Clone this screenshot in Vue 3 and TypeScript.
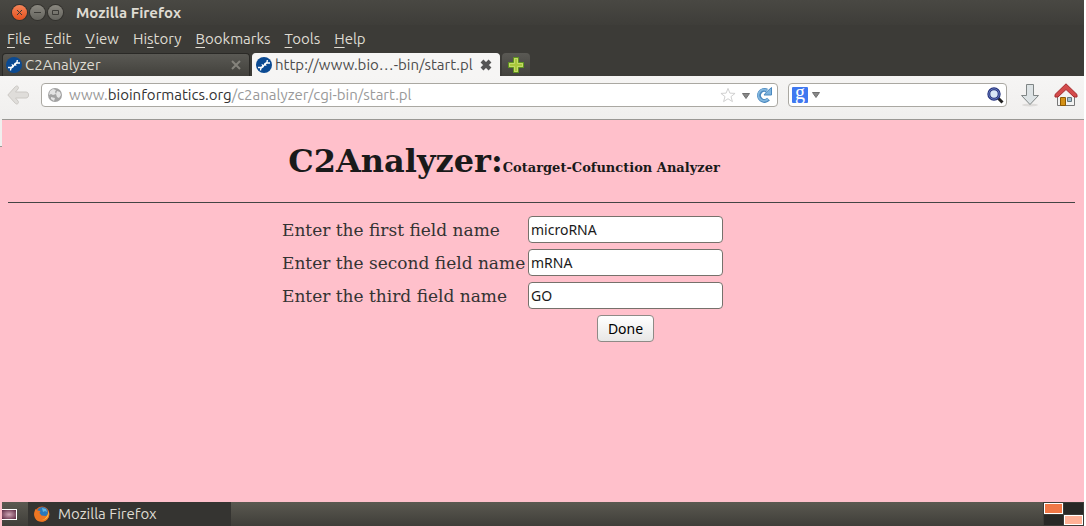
<script setup lang="ts">
import { ref } from 'vue'

interface Field { id: string; label: string; value: string }

const menus: { before: string; key: string; after: string }[] = [
  { before: '', key: 'F', after: 'ile' },
  { before: '', key: 'E', after: 'dit' },
  { before: '', key: 'V', after: 'iew' },
  { before: 'Hi', key: 's', after: 'tory' },
  { before: '', key: 'B', after: 'ookmarks' },
  { before: '', key: 'T', after: 'ools' },
  { before: '', key: 'H', after: 'elp' },
]

const tabs = [
  { title: 'C2Analyzer', active: false },
  { title: 'http://www.bio…-bin/start.pl', active: true },
]

const fields = ref<Field[]>([
  { id: 'first', label: 'Enter the first field name', value: 'microRNA' },
  { id: 'second', label: 'Enter the second field name', value: 'mRNA' },
  { id: 'third', label: 'Enter the third field name', value: 'GO' },
])
const search = ref('')
</script>

<template>
  <div class="window">
    <header class="titlebar">
      <button class="round close" aria-label="Close"><svg viewBox="0 0 15 15"><path d="M5 5l5 5M10 5l-5 5" /></svg></button>
      <button class="round" aria-label="Minimize"><svg viewBox="0 0 15 15"><path d="M4 7.500h7" /></svg></button>
      <button class="round" aria-label="Maximize"><svg viewBox="0 0 15 15"><path d="M4.500 5.500h6v4h-6z" /></svg></button>
      <span class="title">Mozilla Firefox</span>
    </header>

    <nav class="menubar">
      <button v-for="m in menus" :key="m.key + m.after" class="menu">{{ m.before }}<u>{{ m.key }}</u>{{ m.after }}</button>
    </nav>

    <div class="tabs">
      <div v-for="t in tabs" :key="t.title" class="tab" :class="{ active: t.active }">
        <svg class="favicon" viewBox="0 0 16 16"><circle cx="8" cy="8" r="8" fill="#0b4a92" /><path d="M2 10.500h4c2 0 2-4.500 4-4.500h4M4.500 13.500c0-3 1-4 3.500-5.200s3.300-2.300 3.300-5.300" fill="none" stroke="#fff" stroke-width="1.300" /><path d="M6 7l1 3M9 6l1 3" stroke="#fff" stroke-width="1" /></svg>
        <span class="tab-label">{{ t.title }}</span>
        <button class="tab-close" aria-label="Close tab"><svg viewBox="0 0 12 12"><path d="M2 2l8 8M10 2l-8 8" /></svg></button>
      </div>
      <button class="new-tab" aria-label="New tab">
        <svg viewBox="0 0 16 16"><path d="M5.500.5h5v5h5v5h-5v5h-5v-5h-5v-5h5z" fill="#b4cf45" stroke="#5f9420" stroke-width="1" /><path d="M6.500 1.500h3v5h5v3h-5v5h-3v-5h-5v-3h5z" fill="#a9c83c" stroke="#c4da68" /></svg>
      </button>
    </div>

    <div class="toolbar">
      <button class="tool back" aria-label="Back">
        <svg viewBox="0 0 22 20"><path d="M8.500 1.500c1.500-1.500 4 .5 2.500 2.500L8.500 7H19c3.500 0 3.500 6 0 6H8.500l2.500 3c1.500 2-1 4-2.500 2.500L.8 10z" fill="#dfddda" stroke="#cbc8c4" /></svg>
      </button>
      <div class="box location">
        <svg class="globe" viewBox="0 0 16 16"><circle cx="8" cy="8" r="7" fill="#a2a2a2" /><path d="M3 4l3-2 3 1-1 2 1 2-3 1-2-1-2 1zM10 4l3 1 1 3-2 3-2-1-1-3zM4 10l4 1-1 3-3-2z" fill="#e3e3e3" /></svg>
        <span class="url">www.<b>bioinformatics.org</b>/c2analyzer/cgi-bin/start.pl</span>
        <button class="mini star" aria-label="Bookmark"><svg viewBox="0 0 17 16"><path d="M8.500 1l2 5 5.500.3-4.300 3.400 1.500 5.300-4.700-3-4.700 3 1.500-5.300L1 6.300 6.500 6z" fill="#fff" stroke="#cdcdcd" /></svg></button>
        <button class="mini caret" aria-label="History"><svg viewBox="0 0 8 6"><path d="M.5.5h7L4 5.500z" fill="#888" stroke="#707070" /></svg></button>
        <button class="mini reload" aria-label="Reload"><svg viewBox="0 0 16 16"><path d="M12.500 12.200a5.500 5.500 0 1 1-1.500-8.700" fill="none" stroke="#4a88bf" stroke-width="4" /><path d="M15.500.5v7.500H8l2.500-3z" fill="#7db3de" stroke="#4a88bf" /><path d="M12 12a5.500 5.500 0 1 1-1-8.300" fill="none" stroke="#82b6de" stroke-width="2" /></svg></button>
      </div>
      <div class="box search">
        <button class="mini engine" aria-label="Search engine">
          <span class="g">g</span>
          <svg viewBox="0 0 8 6"><path d="M.5.5h7L4 5.500z" fill="#888" stroke="#707070" /></svg>
        </button>
        <input v-model="search" class="query" aria-label="Search" />
        <button class="mini magnifier" aria-label="Search"><svg viewBox="0 0 17 17"><path d="M11 11l4.500 4.500" stroke="#222" stroke-width="3" /><circle cx="7" cy="7" r="5.200" fill="#d9e7f6" stroke="#27357e" stroke-width="3" /><circle cx="7" cy="7" r="5.200" fill="none" stroke="#6478bb" /></svg></button>
      </div>
      <button class="tool download" aria-label="Downloads">
        <svg viewBox="0 0 20 24"><ellipse cx="10" cy="22" rx="8" ry="1.500" fill="#dddbd9" /><path d="M6.500 1.500h7v11h5L10 21.500 1.500 12.500h5z" fill="#dde3e5" stroke="#7f8585" /></svg>
      </button>
      <button class="tool home" aria-label="Home">
        <svg viewBox="0 0 24 24"><path d="M3.500 12L12 4l8.500 8v10.500h-17z" fill="#f2f2f1" stroke="#777" /><path d="M6.500 14.500h5v8h-5z" fill="#d39116" stroke="#8f5902" /><path d="M13.500 14.500h4v4h-4z" fill="#9fc0cf" stroke="#65767d" /><path d="M12 .8L1 11.500v2.500h3l8-7.500 8 7.500h3v-2.500z" fill="#d34b4b" stroke="#a52b2d" /></svg>
      </button>
    </div>

    <main class="page">
      <h1>C2Analyzer:<small>Cotarget-Cofunction Analyzer</small></h1>
      <hr />
      <form @submit.prevent>
        <div v-for="f in fields" :key="f.id" class="row">
          <label :for="f.id">{{ f.label }}</label>
          <input :id="f.id" v-model="f.value" type="text" />
        </div>
        <div class="row"><button class="done" type="submit">Done</button></div>
      </form>
    </main>

    <footer class="panel">
      <button class="desktop" aria-label="Show desktop"><i></i></button>
      <button class="task">
        <svg viewBox="0 0 16 16"><circle cx="8" cy="8" r="7.500" fill="#e4601c" /><circle cx="8.500" cy="6.500" r="5.500" fill="#2a78bb" /><path d="M8 2l4 1 1 3-2-1-2 1z" fill="#62b4dd" /><path d="M1.500 3l2 1.500 3 .5-1 2 2 2.500 4 .5c3-1 3-4 2.500-6 2 4 1.500 8-2 10.500s-9 1.500-11-2.500S.8 5 1.500 3z" fill="#ee7622" /><path d="M14.500 5c1 5-2 9-6.500 9 4-1 6-4 6.500-9z" fill="#fbd24b" /></svg>
        <span>Mozilla Firefox</span>
      </button>
      <div class="pager"><i class="on"></i><i></i><i></i><i class="on light"></i></div>
    </footer>
  </div>
</template>

<style>
body { margin: 0; background: #fff; }
</style>

<style scoped>
* { box-sizing: border-box; }
.window { min-height: 100vh; margin-right: 2px; display: flex; flex-direction: column; font: 15px/20px "Ubuntu", "Noto Sans", "Open Sans", sans-serif; background: #ffc0cb; }
button { font: inherit; border: 0; padding: 0; background: none; color: inherit; }
svg { display: block; flex: none; }
.titlebar { height: 25px; display: flex; align-items: center; gap: 3px; padding-left: 12px; background: linear-gradient(#494843, #3e3d39); color: #dfdbd2; }
.round { width: 15px; height: 15px; border-radius: 50%; background: linear-gradient(#8a8880, #65645e); box-shadow: 0 0 0 1px #33322e; }
.round svg { width: 15px; height: 15px; fill: none; stroke: #3c3b37; }
.round.close { background: linear-gradient(#f58458, #e3511f); }
.title { font-weight: 700; margin-left: 10px; }
.menubar { height: 28px; display: flex; align-items: center; gap: 14px; padding-left: 7px; background: #3c3b37; color: #dfdbd2; }
.menu u { text-underline-offset: 3px; }
.tabs { height: 23px; display: flex; padding-left: 2px; gap: 2px; background: #3c3b37; }
.tab { width: 248px; display: flex; align-items: center; gap: 3px; padding: 0 7px 0 3px; border: 1px solid #2a2926; border-bottom: 0; border-radius: 4px 4px 0 0; background: linear-gradient(#5a5954, #42413c); color: #dfdbd2; }
.favicon { width: 16px; height: 16px; }
.tab-label { flex: 1; white-space: nowrap; }
.tab-close svg { width: 12px; height: 12px; fill: none; stroke: #85837c; stroke-width: 2; }
.active { background: #f6f5f4; color: #4c4c4c; border-color: #f6f5f4; }
.active .tab-close svg { stroke: #555; stroke-width: 4; }
.new-tab { width: 28px; display: flex; align-items: center; justify-content: center; border-radius: 4px 4px 0 0; background: linear-gradient(#5a5954, #42413c); }
.new-tab svg { width: 16px; height: 16px; }
.toolbar { height: 44px; display: flex; align-items: flex-start; padding: 7px 6px 0 7px; background: linear-gradient(#f6f5f4, #f0efee); border-bottom: 1px solid #999894; }
.back { margin-top: 2px; }
.back svg { width: 22px; height: 20px; }
.box { height: 24px; display: flex; align-items: center; background: #fff; border: 1px solid #aaa8a2; border-radius: 4px; }
.location { flex: 1; margin-left: 12px; padding: 0 5px; }
.globe { width: 16px; height: 16px; }
.url { flex: 1; margin-left: 6px; color: #999; white-space: nowrap; }
.url b { font-weight: 400; color: #333; }
.star svg { width: 16px; height: 16px; }
.caret { margin: 2px 6px 0; }
.caret svg, .engine svg { width: 8px; height: 6px; }
.reload svg { width: 16px; height: 16px; }
.search { width: 219px; margin-left: 10px; padding: 0 2px 0 3px; }
.engine { display: flex; align-items: center; gap: 4px; }
.g { width: 16px; height: 16px; background: #3f78f0; color: #fff; font: 400 20px/11px "Liberation Serif", serif; border-radius: 1px; }
.query { flex: 1; min-width: 0; border: 0; background: none; outline: 0; font: inherit; }
.magnifier svg { width: 17px; height: 17px; }
.download { margin-left: 13px; }
.download svg { width: 20px; height: 24px; }
.home { margin-left: 14px; }
.home svg { width: 24px; height: 24px; }
.page { position: relative; flex: 1; margin-left: 2px; padding: 0 9px 0 6px; color: #1a1a1a; font: 16px/20px "DejaVu Serif", serif; }
.page::before { content: ""; position: absolute; left: -2px; top: -1px; width: 2px; height: 27px; background: #f0efee; border-bottom: 1px solid #999894; }
h1 { margin: 21px 0 0; padding-right: 75px; text-align: center; font-size: 32px; line-height: 40px; white-space: nowrap; }
h1 small { font-size: 13px; }
hr { margin: 14px 0 10px; border: 0; height: 1px; background: #444; }
form { width: max-content; margin-left: 274px; }
.row { display: grid; grid-template-columns: 242px 195px; gap: 4px; height: 33px; align-items: center; }
.row label { font-size: 17px; line-height: 20px; color: #333; white-space: nowrap; }
.row input { height: 27px; border: 1px solid #76716b; border-radius: 4px; padding: 0 2px; background: #fff; color: #1a1a1a; font: 14px/20px "Noto Sans", sans-serif; }
.done { grid-column: 2; justify-self: center; width: 57px; height: 27px; border: 1px solid #8e8a86; border-radius: 4px; background: linear-gradient(#fff, #e8e7e6); color: #000; font: 14px/20px "Noto Sans", sans-serif; }
.panel { height: 24px; margin-left: 2px; display: flex; background: linear-gradient(#5b5951, #3f3e39); color: #dfdbd2; }
.desktop { width: 26px; display: flex; align-items: center; }
.desktop i { width: 15px; height: 11px; border: 1px solid #fff; border-left: 0; background: radial-gradient(#d0a5b5, #5a2540); }
.task { width: 203px; display: flex; align-items: center; gap: 8px; padding-left: 6px; background: #353431; }
.task svg { width: 16px; height: 16px; }
.pager { width: 41px; margin-left: auto; padding: 1px; display: grid; grid-template-columns: 1fr 1fr; gap: 1px; background: #3c3b37; }
.pager i { background: #282826; }
.pager .on { background: #f07746; border: 1px solid #fff; }
.pager .light { background: #ffb197; }
</style>
